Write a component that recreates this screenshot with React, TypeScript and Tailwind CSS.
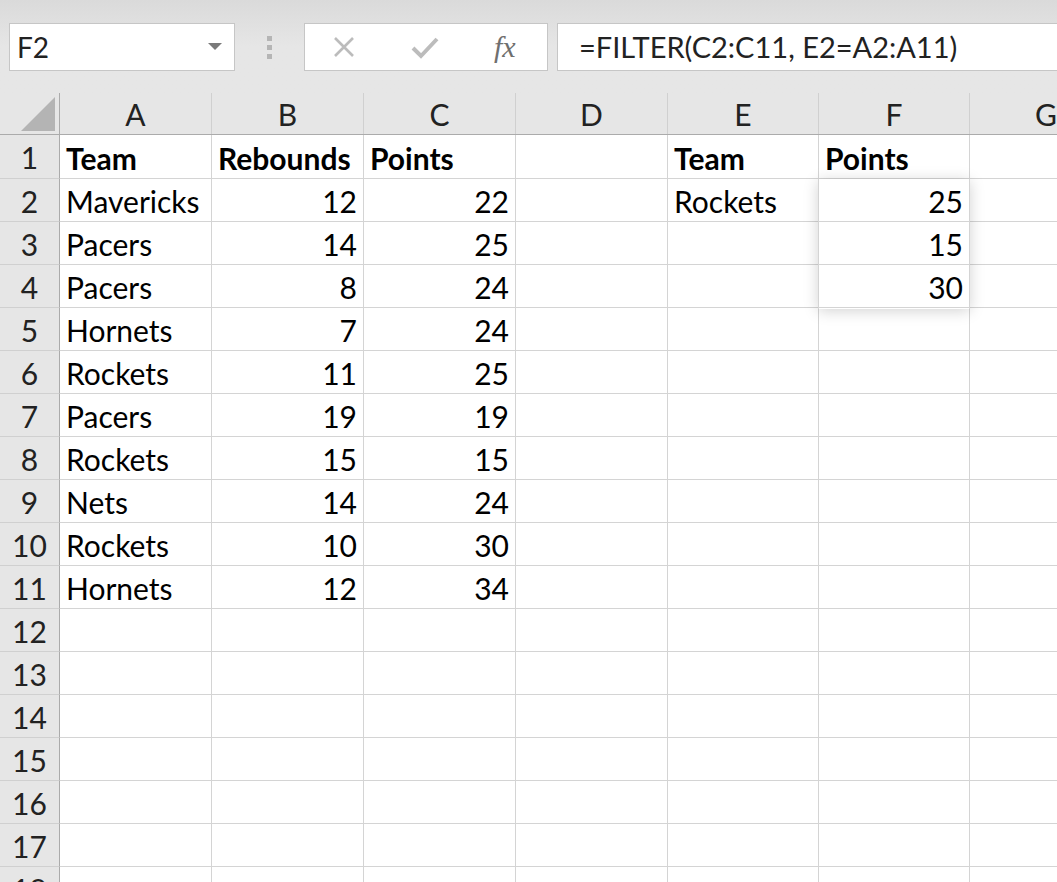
import React from "react";

const COLS = ["A", "B", "C", "D", "E", "F", "G"];
const WIDTHS = ["w-[152px]", "w-[152px]", "w-[152px]", "w-[152px]", "w-[151px]", "w-[151px]", "w-[152px]"];

type Cell = { v: string; bold?: boolean; right?: boolean };

const data: Record<number, Cell[]> = {
  1: [
    { v: "Team", bold: true },
    { v: "Rebounds", bold: true },
    { v: "Points", bold: true },
    { v: "" },
    { v: "Team", bold: true },
    { v: "Points", bold: true },
  ],
  2: [{ v: "Mavericks" }, { v: "12", right: true }, { v: "22", right: true }, { v: "" }, { v: "Rockets" }, { v: "25", right: true }],
  3: [{ v: "Pacers" }, { v: "14", right: true }, { v: "25", right: true }, { v: "" }, { v: "" }, { v: "15", right: true }],
  4: [{ v: "Pacers" }, { v: "8", right: true }, { v: "24", right: true }, { v: "" }, { v: "" }, { v: "30", right: true }],
  5: [{ v: "Hornets" }, { v: "7", right: true }, { v: "24", right: true }],
  6: [{ v: "Rockets" }, { v: "11", right: true }, { v: "25", right: true }],
  7: [{ v: "Pacers" }, { v: "19", right: true }, { v: "19", right: true }],
  8: [{ v: "Rockets" }, { v: "15", right: true }, { v: "15", right: true }],
  9: [{ v: "Nets" }, { v: "14", right: true }, { v: "24", right: true }],
  10: [{ v: "Rockets" }, { v: "10", right: true }, { v: "30", right: true }],
  11: [{ v: "Hornets" }, { v: "12", right: true }, { v: "34", right: true }],
};

const font = { fontFamily: "Lato, 'Noto Sans', sans-serif" };

export default function App() {
  const rows = Array.from({ length: 18 }, (_, i) => i + 1);
  return (
    <div className="w-[1057px] h-[882px] overflow-hidden bg-white text-black" style={font}>
      {/* Formula bar */}
      <div className="h-[93px] bg-gradient-to-b from-[#dadada] via-[#e6e6e6] to-[#e6e6e6] flex items-start pt-[23px] pl-[9px]">
        <div className="w-[226px] h-[48px] shrink-0 bg-white border border-[#c6c6c6] flex items-center justify-between pl-[7px] pr-[12px]">
          <span className="text-[28px] text-[#222]">F2</span>
          <svg width="14" height="8" viewBox="0 0 14 8">
            <path d="M0 0 L14 0 L7 7 Z" fill="#7a7a7a" />
          </svg>
        </div>
        <div className="w-[69px] h-[48px] shrink-0 flex flex-col items-center justify-center gap-[4px]">
          <div className="w-[5px] h-[5px] bg-[#b5b5b5]" />
          <div className="w-[5px] h-[5px] bg-[#b5b5b5]" />
          <div className="w-[5px] h-[5px] bg-[#b5b5b5]" />
        </div>
        <div className="w-[244px] h-[48px] shrink-0 bg-white border border-[#c6c6c6] flex items-center pl-[27px]">
          <svg width="24" height="24" viewBox="0 0 24 24" className="shrink-0">
            <path d="M3 3 L21 21 M21 3 L3 21" stroke="#bcbcbc" strokeWidth="2.6" />
          </svg>
          <svg width="28" height="24" viewBox="0 0 28 24" className="ml-[55px] shrink-0">
            <path d="M2 13 L10 21 L26 4" stroke="#bcbcbc" strokeWidth="4" fill="none" />
          </svg>
          <span
            className="ml-[55px] text-[30px] italic text-[#6f6f6f] leading-none"
            style={{ fontFamily: "'Liberation Serif', serif" }}
          >
            fx
          </span>
        </div>
        <div className="ml-[9px] flex-1 h-[48px] bg-white border border-[#c6c6c6] border-r-0 flex items-center pl-[21px]">
          <span className="text-[29px] text-[#222] whitespace-nowrap">=FILTER(C2:C11, E2=A2:A11)</span>
        </div>
      </div>

      {/* Grid */}
      <div className="relative">
        {/* Column header */}
        <div className="flex h-[42px] bg-[#e6e6e6] border-b border-[#ababab]">
          <div className="w-[60px] shrink-0 border-r border-[#ababab] relative">
            <svg className="absolute left-[21px] top-[4px]" width="34" height="34" viewBox="0 0 34 34">
              <path d="M34 0 L34 34 L0 34 Z" fill="#b4b4b4" />
            </svg>
          </div>
          {COLS.map((c, i) => (
            <div
              key={c}
              className={`${WIDTHS[i]} shrink-0 flex items-center justify-center pt-[2px] text-[30px] text-[#222] ${
                i < 6 ? "border-r border-[#d0d0d0]" : ""
              }`}
            >
              {c}
            </div>
          ))}
        </div>

        {rows.map((r) => (
          <div key={r} className={`flex ${r === 1 ? "h-[44px]" : "h-[43px]"}`}>
            <div className="w-[60px] shrink-0 bg-[#e6e6e6] border-r border-b border-[#ababab] border-b-[#d0d0d0] flex items-center justify-center pt-[2px] text-[30px] text-[#222]">
              {r}
            </div>
            {COLS.map((c, i) => {
              const cell = data[r]?.[i];
              return (
                <div
                  key={c}
                  className={`${WIDTHS[i]} shrink-0 border-b border-[#d4d4d4] ${
                    i < 6 ? "border-r" : ""
                  } flex items-center pt-[3px] px-[6px] text-[30px] whitespace-nowrap overflow-visible ${
                    cell?.right ? "justify-end" : "justify-start"
                  } ${cell?.bold ? "font-bold" : ""}`}
                >
                  {cell?.v}
                </div>
              );
            })}
          </div>
        ))}

        {/* Spill range shadow */}
        <div className="absolute left-[818px] top-[86px] w-[152px] h-[130px] shadow-[0_2px_14px_rgba(0,0,0,0.18)] pointer-events-none" />
      </div>
    </div>
  );
}
